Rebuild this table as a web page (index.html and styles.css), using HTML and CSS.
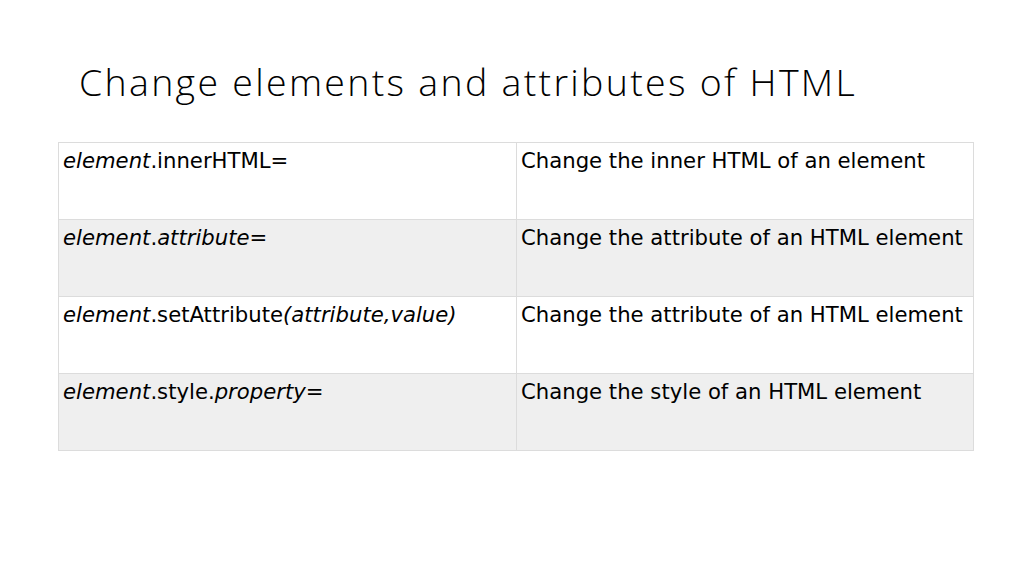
FILE: index.html
```html
<!DOCTYPE html>
<html>
<head>
<meta charset="utf-8">
<link rel="stylesheet" href="styles.css">
</head>
<body>
<div class="slide">
  <h1 class="title">Change elements and attributes of HTML</h1>
  <table class="methods">
    <tr>
      <td class="code"><i>element</i>.innerHTML=</td>
      <td class="desc">Change the inner HTML of an element</td>
    </tr>
    <tr class="alt">
      <td class="code"><i>element</i>.<i>attribute</i>=</td>
      <td class="desc">Change the attribute of an HTML element</td>
    </tr>
    <tr>
      <td class="code"><i>element</i>.setAttribute<i>(attribute,value)</i></td>
      <td class="desc">Change the attribute of an HTML element</td>
    </tr>
    <tr class="alt">
      <td class="code"><i>element</i>.style.<i>property</i>=</td>
      <td class="desc">Change the style of an HTML element</td>
    </tr>
  </table>
</div>
</body>
</html>
```
FILE: styles.css
```css
html, body {
  margin: 0;
  padding: 0;
  background: #ffffff;
}
.slide {
  width: 1024px;
  height: 576px;
  padding: 53px 0 0 58px;
  box-sizing: border-box;
}
.title {
  margin: 0 0 31px 21px;
  font-family: "Open Sans", "Noto Sans", sans-serif;
  font-weight: 300;
  font-size: 37.5px;
  line-height: 58px;
  color: #000;
  letter-spacing: 2.3px;
}
.methods {
  border-collapse: collapse;
  width: 916px;
  table-layout: fixed;
  font-family: "DejaVu Sans", Verdana, sans-serif;
  font-size: 21.2px;
  color: #000;
}
.methods td {
  height: 77px;
  border: 1px solid #dcdcdc;
  padding: 5px 4px 0 4px;
  vertical-align: top;
  line-height: 25px;
  box-sizing: border-box;
  white-space: nowrap;
}
.methods td.code {
  width: 458px;
}
.methods tr.alt td {
  background: #efefef;
}
```
